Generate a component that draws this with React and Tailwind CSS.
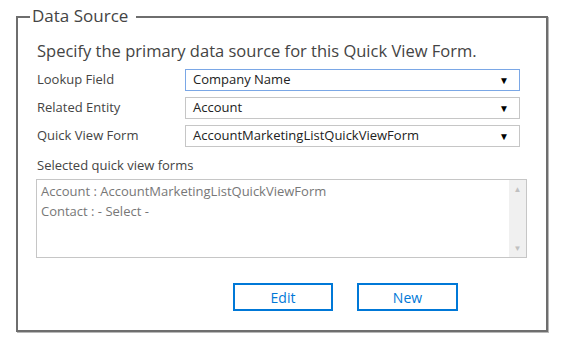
import React from 'react';

const font = { fontFamily: '"Segoe UI", "Open Sans", "Noto Sans", sans-serif' };

const SelectBox = ({ value, focused }) => (
    <div
        className={`flex items-center justify-between h-[22px] w-[335px] pl-[7px] pr-[10px] text-[13px] text-[#222] bg-white border ${focused ? 'border-[#7aa7e6]' : 'border-[#c6c6c6]'}`}
    >
        <span>{value}</span>
        <span className="text-[10px] text-black">▼</span>
    </div>
);

const Row = ({ label, value, focused }) => (
    <div className="flex items-center h-[22px]">
        <div className="w-[148px] text-[13px] text-[#444]">{label}</div>
        <SelectBox value={value} focused={focused} />
    </div>
);

export default function App() {
    return (
        <div className="w-[565px] h-[339px] bg-white pt-[16px] pl-[16px]" style={font}>
            <div className="relative w-[532px] h-[316px] border-2 border-[#6e6e6e] shadow-[1px_1px_0_#b8b8b8]">
                <span className="absolute left-[12px] top-[-13px] bg-white pl-[2px] pr-[8px] text-[17px] text-[#444] leading-[22px]">
                    Data Source
                </span>

                <div className="pl-[19px] pt-[22px]">
                    <div className="text-[16.5px] text-[#444] leading-[22px]">
                        Specify the primary data source for this Quick View Form.
                    </div>

                    <div className="mt-[7px] flex flex-col gap-[6px]">
                        <Row label="Lookup Field" value="Company Name" focused />
                        <Row label="Related Entity" value="Account" />
                        <Row label="Quick View Form" value="AccountMarketingListQuickViewForm" />
                    </div>

                    <div className="mt-[9px] text-[13px] text-[#444] leading-[18px]">Selected quick view forms</div>

                    <div className="mt-[5px] flex w-[491px] h-[79px] border border-[#c6c6c6] -ml-[1px]">
                        <div className="flex-1 pl-[4px] pt-[1px] text-[13px] text-[#777] leading-[20px]">
                            <div>Account : AccountMarketingListQuickViewForm</div>
                            <div>Contact : - Select -</div>
                        </div>
                        <div className="w-[17px] bg-[#f0f0f0] flex flex-col justify-between items-center py-[3px] text-[8px] text-[#c0c0c0]">
                            <span>▲</span>
                            <span>▼</span>
                        </div>
                    </div>

                    <div className="mt-[25px] flex gap-[24px] pl-[196px]">
                        <button className="w-[100px] h-[28px] border-2 border-[#0078d7] text-[14px] text-[#0078d7]">Edit</button>
                        <button className="w-[101px] h-[28px] border-2 border-[#0078d7] text-[14px] text-[#0078d7]">New</button>
                    </div>
                </div>
            </div>
        </div>
    );
}
